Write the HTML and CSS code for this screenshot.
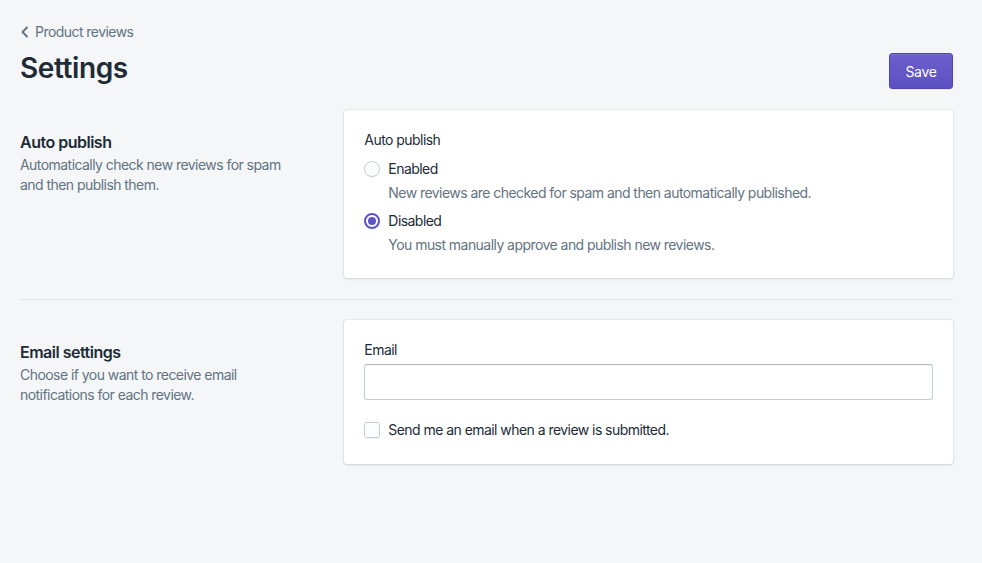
FILE: index.html
```html
<!DOCTYPE html>
<html lang="en">
<head>
<meta charset="utf-8">
<title>Settings</title>
<link rel="stylesheet" href="styles.css">
</head>
<body>
<div class="page">
  <nav class="breadcrumb">
    <svg class="chev" width="10" height="12" viewBox="0 0 10 12"><path d="M7 1.5 L2.5 6 L7 10.5" fill="none" stroke="#637381" stroke-width="2" stroke-linecap="round" stroke-linejoin="round"/></svg>
    <span>Product reviews</span>
  </nav>
  <header class="header">
    <h1 class="title">Settings</h1>
    <button class="btn-primary">Save</button>
  </header>

  <section class="section first">
    <div class="annotation">
      <h2 class="ann-title">Auto publish</h2>
      <p class="ann-desc">Automatically check new reviews for spam and then publish them.</p>
    </div>
    <div class="card card-choices">
      <div class="field-label">Auto publish</div>
      <div class="choice">
        <span class="radio"></span>
        <span class="choice-label">Enabled</span>
      </div>
      <div class="choice-help">New reviews are checked for spam and then automatically published.</div>
      <div class="choice">
        <span class="radio checked"></span>
        <span class="choice-label">Disabled</span>
      </div>
      <div class="choice-help">You must manually approve and publish new reviews.</div>
    </div>
  </section>

  <hr class="divider">

  <section class="section">
    <div class="annotation">
      <h2 class="ann-title">Email settings</h2>
      <p class="ann-desc">Choose if you want to receive email notifications for each review.</p>
    </div>
    <div class="card card-email">
      <div class="field-label tight">Email</div>
      <div class="input"></div>
      <div class="choice check-row">
        <span class="checkbox"></span>
        <span class="choice-label">Send me an email when a review is submitted.</span>
      </div>
    </div>
  </section>
</div>
</body>
</html>
```

FILE: styles.css
```css
* { box-sizing: border-box; }
html, body { margin: 0; padding: 0; }
body {
  background: #f4f6f8;
  font-family: Inter, "Noto Sans", "Liberation Sans", sans-serif;
  color: #212b36;
  font-size: 14px;
  line-height: 20px;
  letter-spacing: -0.55px;
  -webkit-font-smoothing: antialiased;
}
.page {
  padding: 22px 29px 40px 20px;
}
.breadcrumb {
  display: flex;
  align-items: center;
  gap: 5px;
  color: #637381;
  font-size: 14px;
  line-height: 20px;
}
.chev { display: block; }
.header {
  display: flex;
  justify-content: space-between;
  align-items: flex-start;
  margin-top: 1px;
}
.title {
  margin: 9px 0 0;
  font-size: 28px;
  line-height: 32px;
  font-weight: 600;
  letter-spacing: -0.4px;
  color: #212b36;
}
.btn-primary {
  margin-top: 10px;
  width: 64px;
  height: 36px;
  border: 1px solid #5144b4;
  border-radius: 3px;
  background: linear-gradient(180deg, #6d60cb, #5d50c2);
  color: #fff;
  font-family: inherit;
  font-size: 14px;
  letter-spacing: -0.3px;
  box-shadow: inset 0 1px 0 0 #7a6ed0, 0 1px 0 0 rgba(22,29,37,.05);
  padding: 0;
}
.section {
  display: grid;
  grid-template-columns: 1fr 2fr;
  gap: 20px;
}
.section.first { margin-top: 21px; }
.annotation { padding: 20px 20px 0 0; }
.ann-title {
  margin: 0;
  font-size: 16px;
  line-height: 24px;
  font-weight: 600;
  letter-spacing: -0.5px;
}
.ann-desc {
  margin: 1px 0 0;
  color: #637381;
  line-height: 20px;
}
.card {
  background: #fff;
  border-radius: 3px;
  box-shadow: 0 0 0 1px rgba(63,63,68,.05), 0 1px 3px 0 rgba(63,63,68,.15);
  padding: 20px;
}
.card-choices { padding-bottom: 23px; }
.card-email { padding-bottom: 22px; }
.field-label {
  line-height: 20px;
  margin-bottom: 7px;
}
.field-label.tight { margin-bottom: 4px; }
.choice {
  display: flex;
  align-items: center;
  gap: 8px;
  height: 24px;
}
.radio {
  width: 16px;
  height: 16px;
  border-radius: 50%;
  border: 1px solid #c4cdd5;
  background: linear-gradient(180deg, #fff, #f9fafb);
  box-shadow: 0 1px 0 0 rgba(22,29,37,.05);
  position: relative;
  flex: none;
}
.radio.checked {
  border: 2px solid #5c55c8;
}
.radio.checked::after {
  content: "";
  position: absolute;
  left: 2px;
  top: 2px;
  width: 8px;
  height: 8px;
  border-radius: 50%;
  background: #5c55c8;
}
.choice-help {
  color: #637381;
  padding-left: 24px;
  line-height: 20px;
  margin: 2px 0 6px;
}
.choice-help:last-child { margin-bottom: 0; }
.divider {
  border: 0;
  border-top: 1px solid #dfe3e8;
  margin: 21px 0 20px;
  height: 0;
}
.input {
  height: 36px;
  border: 1px solid #c4cdd5;
  border-top-color: #aeb9c4;
  border-radius: 3px;
  background: #fff;
  box-shadow: inset 0 1px 0 0 rgba(99,115,129,.05);
}
.check-row { margin-top: 18px; }
.checkbox {
  width: 16px;
  height: 16px;
  border: 1px solid #c4cdd5;
  border-radius: 3px;
  background: linear-gradient(180deg, #fff, #f9fafb);
  box-shadow: 0 1px 0 0 rgba(22,29,37,.05);
  flex: none;
}
```
